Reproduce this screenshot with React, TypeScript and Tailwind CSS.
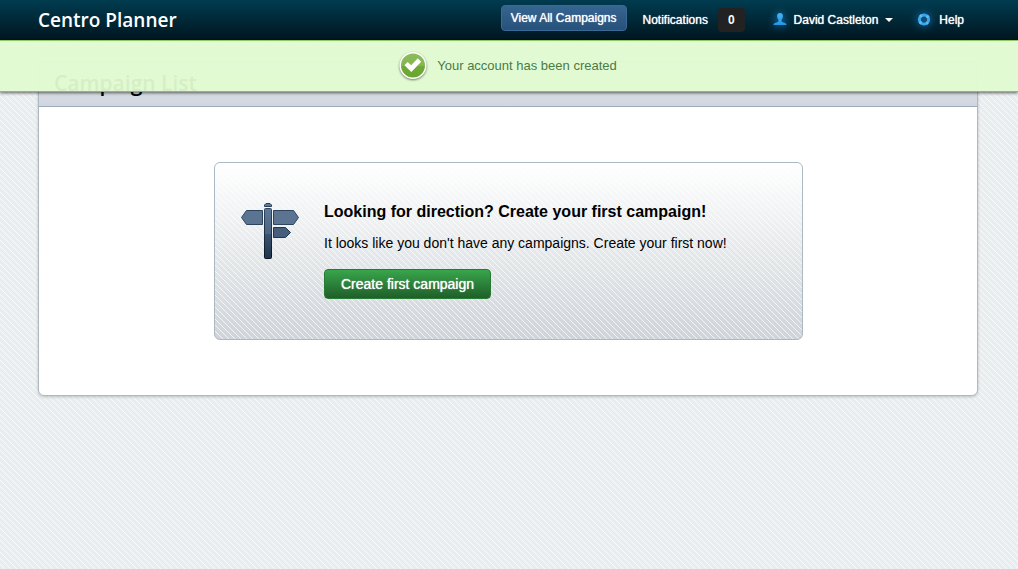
import React from "react";

const stripes =
  "bg-[linear-gradient(45deg,transparent_46%,rgba(255,255,255,0.7)_46%,rgba(255,255,255,0.7)_54%,transparent_54%)] bg-[length:6px_6px]";

function UserIcon() {
  return (
    <svg width="14" height="14" viewBox="0 0 14 14" aria-hidden="true" className="drop-shadow-[0_0_4px_#1c8be0]">
      <defs>
        <linearGradient id="user" x1="0" y1="0" x2="0" y2="1">
          <stop offset="0" stopColor="#45b4f2" />
          <stop offset="1" stopColor="#2496e6" />
        </linearGradient>
      </defs>
      <path
        fill="url(#user)"
        d="M7 0c1.900 0 2.900 1.100 2.900 2.900 0 1.700-.7 2.900-1.300 3.700v1.800c.6 1 4.900 1 4.900 3.300V12H.5v-.3C.5 9.400 4.800 9.400 5.400 8.400V6.600C4.800 5.800 4.100 4.600 4.100 2.900 4.100 1.100 5.100 0 7 0Z"
      />
    </svg>
  );
}

function HelpIcon() {
  return (
    <svg width="14" height="14" viewBox="0 0 14 14" aria-hidden="true" className="drop-shadow-[0_0_4px_#1c8be0]">
      <circle cx="7" cy="6.500" r="4.600" fill="none" stroke="#3ba6ea" strokeWidth="3" />
      <circle
        cx="7"
        cy="6.500"
        r="4.600"
        fill="none"
        stroke="#5fbdf3"
        strokeWidth="3"
        strokeDasharray="2.225 5"
        strokeDashoffset="1.112"
        transform="rotate(45 7 6.500)"
      />
    </svg>
  );
}

function CheckIcon() {
  return (
    <svg width="32" height="32" viewBox="0 0 32 32" aria-hidden="true" className="drop-shadow-[0_1px_1px_rgba(0,0,0,0.5)]">
      <defs>
        <linearGradient id="check" x1="0" y1="0" x2="0" y2="1">
          <stop offset="0" stopColor="#8dbb5c" />
          <stop offset="0.500" stopColor="#86b551" />
          <stop offset="0.520" stopColor="#71a936" />
          <stop offset="1" stopColor="#69a72c" />
        </linearGradient>
      </defs>
      <circle cx="16" cy="15.500" r="13.500" fill="#fff" />
      <circle cx="16" cy="15.500" r="12" fill="url(#check)" />
      <path d="M7.500 15.300l3.200-3.200 3.500 3.200 6.600-7 3.400 3.400-9.900 10.200z" fill="#fff" />
    </svg>
  );
}

function SignpostIcon() {
  return (
    <svg width="60" height="58" viewBox="0 0 60 58" aria-hidden="true" className="shrink-0">
      <defs>
        <linearGradient id="post" x1="0" y1="0" x2="0" y2="1">
          <stop offset="0" stopColor="#5d7794" />
          <stop offset="0.500" stopColor="#4b6583" />
          <stop offset="0.510" stopColor="#3b5471" />
          <stop offset="1" stopColor="#20344c" />
        </linearGradient>
        <linearGradient id="edge" x1="0" y1="0" x2="0" y2="1">
          <stop offset="0" stopColor="#2e4763" />
          <stop offset="1" stopColor="#0a1420" />
        </linearGradient>
      </defs>
      <path d="M24.500 4.500V3L26 1.500h4L31.500 3v1.500z" fill="#60799a" stroke="#29405b" />
      <rect x="24.500" y="6.500" width="7" height="50" rx="1" fill="url(#post)" stroke="url(#edge)" />
      <path d="M22.500 8.500v14h-16l-5-7 5-7z" fill="#5b7491" stroke="#2d445f" />
      <path d="M33.500 8.500h20l5 7-5 7h-20z" fill="#5b7491" stroke="#2d445f" />
      <path d="M33.500 25.500h12l5 5-5 5h-12z" fill="#445e7c" stroke="#20354e" />
    </svg>
  );
}

function Header() {
  return (
    <header className="flex h-10 items-center justify-between bg-linear-to-b from-[#003c50] to-[#001620] px-[38px] text-white">
      <a href="#" className="font-['Open_Sans','Noto_Sans',sans-serif] text-[19px] leading-7 font-semibold">
        Centro Planner
      </a>
      <nav className="flex items-center pr-4 text-[12px] leading-4 [text-shadow:0_0_1px_#fff]">
        <a
          href="#"
          className="mr-4 mb-1 h-[26px] rounded border border-[#3a6a96] bg-linear-to-b from-[#356590] to-[#27517a] px-[9px] py-1"
        >
          View All Campaigns
        </a>
        <a href="#" className="mr-7 flex items-center gap-[10px]">
          Notifications
          <span className="rounded bg-[#222] px-[10px] py-1 font-bold [text-shadow:none]">0</span>
        </a>
        <button type="button" className="mr-6 flex items-center gap-[7px] [text-shadow:0_0_1px_#fff]">
          <UserIcon />
          David Castleton
          <svg width="8" height="4" viewBox="0 0 8 4" aria-hidden="true">
            <path d="M0 0h8L4 4z" fill="#fff" />
          </svg>
        </button>
        <a href="#" className="flex items-center gap-2">
          <HelpIcon />
          Help
        </a>
      </nav>
    </header>
  );
}

function Notice() {
  return (
    <div
      role="status"
      className="absolute inset-x-0 top-10 flex h-[52px] items-center justify-center gap-2 border-y border-t-[#8fc866] border-b-[#8fb96f] bg-[#e2fbd1]/95 pr-1 text-[13px] text-[#4a7a45] shadow-[0_1px_3px_rgba(0,0,0,0.6)]"
    >
      <CheckIcon />
      <p>Your account has been created</p>
    </div>
  );
}

export default function App() {
  return (
    <div className={`relative min-h-screen bg-[#e8edf0] font-['Liberation_Sans',Arial,sans-serif] ${stripes}`}>
      <Header />
      <Notice />
      <main className="mt-[21px] mr-10 ml-[38px] rounded-md border border-[#b0b9c2] bg-white shadow-[0_1px_3px_rgba(0,0,0,0.2)]">
        <h1 className="h-[45px] rounded-t-md border-b border-[#9eabb8] bg-linear-to-b from-[#e9ecf0] to-[#d0d6df] px-[15px] pt-[7px] font-['Open_Sans','Noto_Sans',sans-serif] text-[21px] leading-7 font-semibold text-black">
          Campaign List
        </h1>
        <div className="pt-[55px] pr-[174px] pb-[55px] pl-[175px]">
          <section className="rounded-md border border-[#abb9c5] bg-linear-to-b from-white to-[#ced4d9]">
            <div className={`flex gap-6 rounded-md pt-[39px] pr-4 pb-10 pl-[25px] ${stripes}`}>
              <SignpostIcon />
              <div className="text-black">
                <h2 className="text-[16px] leading-5 font-bold">Looking for direction? Create your first campaign!</h2>
                <p className="mt-[11px] text-[14px] leading-5">
                  It looks like you don't have any campaigns. Create your first now!
                </p>
                <button
                  type="button"
                  className="mt-4 h-[30px] rounded border border-[#267a36] bg-linear-to-b from-[#38a64b] to-[#205f2a] px-4 text-[14px] leading-5 text-white [text-shadow:0_0_1px_#fff]"
                >
                  Create first campaign
                </button>
              </div>
            </div>
          </section>
        </div>
      </main>
    </div>
  );
}
